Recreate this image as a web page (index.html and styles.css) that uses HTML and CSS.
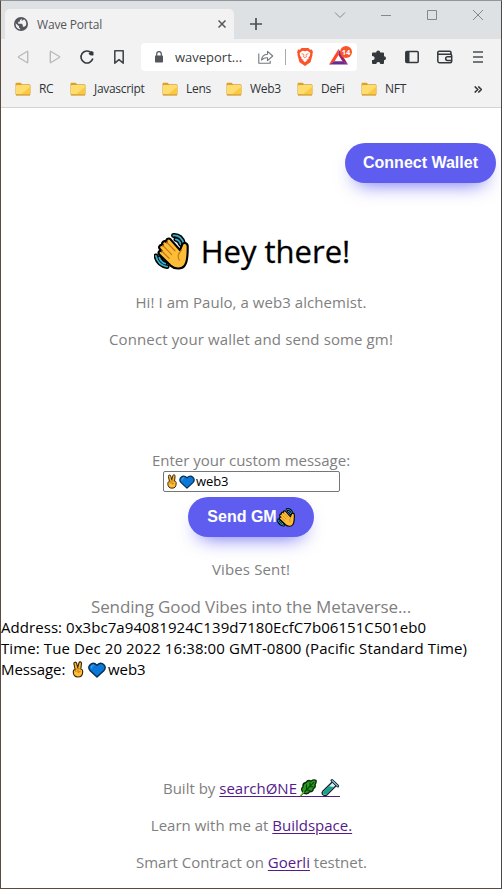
FILE: index.html
```
<!DOCTYPE html>
<html lang="en">
<head>
<meta charset="utf-8">
<title>Wave Portal</title>
<link rel="stylesheet" href="styles.css">
</head>
<body>
<svg class="defs" aria-hidden="true">
  <symbol id="wave" viewBox="0 0 36 38">
    <path d="M20 2.500Q28 2 30.500 11M22.500 6.500q3.500.5 5 5M2 23.500Q4 33 13.500 34.500M5.500 25.500q1.500 4.500 6 6" fill="none" stroke="#000" stroke-width="5" stroke-linecap="round"/>
    <path d="M20 2.500Q28 2 30.500 11M22.500 6.500q3.500.5 5 5M2 23.500Q4 33 13.500 34.500M5.500 25.500q1.500 4.500 6 6" fill="none" stroke="#35b0d0" stroke-width="1.900" stroke-linecap="round"/>
    <path d="M17 6.500c-2-2-5.500 0-4 3-2.500-2.500-6 .3-4 3-2.500-1-5 1.500-3 4l2 2.200c-2.500-1.500-4.500 1.500-2.500 3.500L17 33.500c5 4.500 12 3.500 14.500 0 3.500-4.500 3-11.500 3.200-19.500 0-4.500-5.400-5.200-6.200-.8l-1.800 4.300z" fill="#fdbd38" stroke="#000" stroke-width="2.200" stroke-linejoin="round"/>
    <path d="M13 9.500l8.500 8.700M9 12.700l9.200 9.500M8 18.500l7.500 7.500M28 18q-5 4.500-2 10" fill="none" stroke="#c67a12" stroke-width="1.300" stroke-linecap="round"/>
  </symbol>
  <symbol id="victory" viewBox="0 0 12 18">
    <path d="M3 9L1.700 3C1.400 1 4 .6 4.500 2.400L5.700 7 7 2C7.500.2 10 .8 9.700 2.700L9 8.500c1.600.2 2 1 2 2.500 0 4-1.200 6-5 6-3.500 0-5-2-5-5.500C1 9.800 1.600 9 3 9z" fill="#fdbd38" stroke="#3a2508" stroke-width="1.200" stroke-linejoin="round"/>
    <path d="M3 9l3-1 3 .6M3.500 9.200l.3 2.500M6 9v3l2.700-1" fill="none" stroke="#b76e0e" stroke-width=".9"/>
  </symbol>
  <symbol id="heart" viewBox="0 0 18 16">
    <path d="M9 15L2.200 8.700C-1.500 4.500 4-1.500 9 3.200 14-1.500 19.500 4.500 15.800 8.700z" fill="#0a78d8" stroke="#082b50" stroke-width="1.400" stroke-linejoin="round"/>
    <path d="M3.300 6q0-2.200 2-2.800" fill="none" stroke="#43a7f5" stroke-width="1.200" stroke-linecap="round"/>
  </symbol>
  <symbol id="herb" viewBox="0 0 18 18">
    <path d="M4.500 14Q1 10 4 8q-.5-4 3-4.500Q9 .5 12 2.200 14.500.2 17 1.300q.5 2.500-1 4.200 1 3-1.700 4.200 0 3-3.600 3Q9 15.800 4.500 14z" fill="#2c9a20" stroke="#092b08" stroke-width="1.400" stroke-linejoin="round"/>
    <path d="M1.500 17L15 3.200M7.500 10.500V5.500M11 7.200V3.500M7 11.300h4.500M10.500 7.800h4" fill="none" stroke="#08400a" stroke-width="1.100"/>
    <path d="M1.200 17l4-4.300" stroke="#78c928" stroke-width="1.200"/>
  </symbol>
  <symbol id="tube" viewBox="0 0 18 18">
    <path d="M11.500 2.700L1.800 12.300c-2 2.500 1.500 5.800 4 3.700l9.500-9.600z" fill="#d5eef5" stroke="#172027" stroke-width="1.300"/>
    <path d="M8 7.200L2.400 12.800c-1.300 1.800 1 4 2.900 2.600l7.200-7.300z" fill="#14a48d"/>
    <path d="M11 1.500l5.800 5.600" stroke="#172027" stroke-width="2.800" stroke-linecap="round"/>
    <path d="M11.200 1.700l5.400 5.200" stroke="#82cbe8" stroke-width="1.200" stroke-linecap="round"/>
  </symbol>
  <symbol id="folder" viewBox="0 0 16 14">
    <path d="M.5 12V1.700Q.5.700 1.500.7h4.300l1.200 1.500H14q1.500 0 1.500 1.400V12q0 1-1 1h-13q-1 0-1-1z" fill="#d9a32a"/>
    <path d="M1 4q0-1 1-1h12q1 0 1 1v7.500q0 .8-.8.8H1.800q-.8 0-.8-.8z" fill="#ffdc70"/>
    <path d="M15 5v6.500q0 .8-.8.800H6z" fill="#fbc83f"/>
    <path d="M1 13.200h14" stroke="#c99326" stroke-width=".8"/>
  </symbol>
</svg>

<div class="window">
  <header class="browser">
    <div class="tabstrip">
      <div class="tab">
        <svg class="globe" viewBox="0 0 14 14"><circle cx="7" cy="7" r="7" fill="#53575b"/><path d="M7.600 1.600L5.800 3.400v1.300H4.200v2h3.600l1 1.400v1.700h1.400L12 8.500Q13 4.500 10 2.300L8.700 3.600h-1zM1.600 6.200l3.400 3v1.200l1.200 1v1.100Q1.500 11.500 1.600 6.200z" fill="#f2f2f2"/></svg>
        <span class="tab-title">Wave Portal</span>
        <svg class="tab-close" viewBox="0 0 8 8"><path d="M.5.5l7 7m0-7l-7 7" stroke="#53575b" stroke-width="1.500"/></svg>
      </div>
      <svg class="new-tab" viewBox="0 0 12 12"><path d="M6 0v12M0 6h12" stroke="#4c5054" stroke-width="1.700"/></svg>
      <div class="controls">
        <svg viewBox="0 0 12 12"><path d="M1 3.500l5 5 5-5" /></svg>
        <svg viewBox="0 0 12 12"><path d="M1 6.500h10"/></svg>
        <svg viewBox="0 0 12 12"><path d="M1.500 1.500h9v9h-9z"/></svg>
        <svg viewBox="0 0 12 12"><path d="M1 1l10 10M11 1L1 11"/></svg>
      </div>
    </div>

    <div class="toolbar">
      <div class="nav">
        <svg viewBox="0 0 16 16"><path d="M12.700 2.800v10.400q0 .8-.7.300L3.700 8.500q-.7-.5 0-1L12 2.500q.7-.5.7.3z" fill="none" stroke="#b9babc" stroke-width="1.400"/></svg>
        <svg viewBox="0 0 16 16"><path d="M3.300 2.800v10.400q0 .8.700.3l8.300-5q.7-.5 0-1L4 2.500q-.7-.5-.7.3z" fill="none" stroke="#b9babc" stroke-width="1.400"/></svg>
        <svg viewBox="0 0 16 16"><path d="M12.300 3.800A6 6 0 1 0 13.800 9.500" fill="none" stroke="#34383c" stroke-width="1.600"/><path d="M9.500 4.700l2.800-2.700 2.200 1v3.200q-2.500 1.200-5-1.500z" fill="#34383c"/></svg>
        <svg viewBox="0 0 16 16"><path d="M3.800 1.800h8.400v12.400L8 10.700l-4.200 3.500z" fill="none" stroke="#45494d" stroke-width="1.600" stroke-linejoin="round"/></svg>
      </div>
      <div class="address-bar">
        <svg class="lock" viewBox="0 0 8 12"><path d="M1.700 5V3a2.300 2.300 0 0 1 4.600 0v2" fill="none" stroke="#53575b" stroke-width="1.200"/><rect y="4.500" width="8" height="7" rx=".8" fill="#53575b"/></svg>
        <span class="url">waveport...</span>
        <svg class="share" viewBox="0 0 16 14"><path d="M.8 3.500v9.700h11.400v-2.500M3.500 10q.5-5.500 6-5.800V1.300L14.700 6l-5.200 4.700V7.800Q6 7.500 3.500 10z" fill="none" stroke="#74777a" stroke-width="1.100" stroke-linejoin="round"/></svg>
        <span class="divider"></span>
        <svg class="lion" viewBox="0 0 16 18"><path d="M4.500 0h7L13 1.700l2-.1 1 2.800-.6 1 .1 1.600-2 7.200L8 18l-5.500-3.800L.500 7l.1-1.600-.6-1 1-2.800 2 .1z" fill="#fb542b"/><path d="M5.500 2.700L8 3.200l2.500-.5L13.300 5l-.5 3-1.500 1.700.3 1.300L9 12l-1 1-1-1-2.600-1 .3-1.300L3.200 8l-.5-3z" fill="#fff"/><path d="M4.500 5.700l2.500.8L6.600 9l1.400 1 1.400-1L9 6.500l2.500-.8" fill="none" stroke="#fb542b" stroke-width=".7"/><path d="M5.700 12.300L8 14.300l2.300-2-2.300-.6z" fill="#fff"/></svg>
        <span class="rewards">
          <svg viewBox="0 0 19 16"><path d="M9.500 0L0 15.500l5.500-3 4-6.500z" fill="#ff4724"/><path d="M9.500 0L19 15.500l-5.500-3-4-6.500z" fill="#9e1f63"/><path d="M0 15.500h19l-5.500-3.200h-8z" fill="#662d91"/></svg>
          <span class="badge">14</span>
        </span>
      </div>
      <div class="tools">
        <svg viewBox="0 0 16 16"><path d="M1 4.500q0-1 1-1h3.200a2 2 0 1 1 4 0H12q1 0 1 1v2.800a2 2 0 1 1 0 4V14q0 1-1 1H9.300a2 2 0 1 0-4 0H2q-1 0-1-1v-3a2 2 0 1 0 0-3.800z" fill="#34383c"/></svg>
        <svg viewBox="0 0 16 16"><rect x="1.800" y="2.600" width="12.400" height="11" rx="1" fill="none" stroke="#34383c" stroke-width="1.500"/><path d="M2 2.500h3.500v11H2z" fill="#34383c"/></svg>
        <svg viewBox="0 0 16 16"><path d="M14 5.200V3.500q0-1.200-1.300-1.200H2.200Q.8 2.300.8 3.600v8.500q0 1.600 1.500 1.600h10.900q1.500 0 1.500-1.500V6.700q0-1.500-1.500-1.500H2.300Q.8 5.200.8 3.900M14.800 7.700H10.500a1.800 1.800 0 0 0 0 3.700h4.300" fill="none" stroke="#34383c" stroke-width="1.500"/></svg>
        <svg viewBox="0 0 16 16"><path d="M3 3h10M3 8h10M3 13h10" stroke="#4b4f53" stroke-width="1.700"/></svg>
      </div>
    </div>

    <nav class="bookmarks">
      <span class="bm bm-rc"><svg><use href="#folder"/></svg><b>RC</b></span>
      <span class="bm bm-js"><svg><use href="#folder"/></svg><b>Javascript</b></span>
      <span class="bm bm-lens"><svg><use href="#folder"/></svg><b>Lens</b></span>
      <span class="bm bm-web3"><svg><use href="#folder"/></svg><b>Web3</b></span>
      <span class="bm bm-defi"><svg><use href="#folder"/></svg><b>DeFi</b></span>
      <span class="bm"><svg><use href="#folder"/></svg><b>NFT</b></span>
      <svg class="more" viewBox="0 0 8 7"><path d="M.7.5l3 3-3 3M4.300.5l3 3-3 3" fill="none" stroke="#34383c" stroke-width="1.600"/></svg>
    </nav>
  </header>

  <main class="page">
    <div class="wallet"><button class="btn btn-wallet">Connect Wallet</button></div>
    <h1><svg class="wave-lg"><use href="#wave"/></svg><span>Hey there!</span></h1>
    <p class="bio">Hi! I am Paulo, a web3 alchemist.</p>
    <p class="intro">Connect your wallet and send some gm!</p>

    <form class="message">
      <label for="msg">Enter your custom message:</label>
      <div class="field" id="msg"><svg class="victory"><use href="#victory"/></svg><svg class="heart"><use href="#heart"/></svg><span>web3</span></div>
      <button type="button" class="btn btn-send">Send GM<svg><use href="#wave"/></svg></button>
    </form>

    <p class="sent">Vibes Sent!</p>
    <p class="sending">Sending Good Vibes into the Metaverse...</p>
    <div class="log">
      <div class="addr">Address: 0x3bc7a94081924C139d7180EcfC7b06151C501eb0</div>
      <div class="time">Time: Tue Dec 20 2022 16:38:00 GMT-0800 (Pacific Standard Time)</div>
      <div class="msg">Message: <svg class="victory"><use href="#victory"/></svg><svg class="heart"><use href="#heart"/></svg><span>web3</span></div>
    </div>

    <footer>
      <p>Built by <a href="#">searchØNE<span class="emojis"><svg><use href="#herb"/></svg><svg><use href="#tube"/></svg></span></a></p>
      <p>Learn with me at <a href="#">Buildspace.</a></p>
      <p>Smart Contract on <a href="#">Goerli</a> testnet.</p>
    </footer>
  </main>
</div>
</body>
</html>
```
FILE: styles.css
```
* { box-sizing: border-box; }
html, body { margin: 0; height: 889px; overflow: hidden; }
body { font: 15px/21px "Open Sans", "Noto Sans", sans-serif; color: #000; }
svg { display: block; flex: none; }
.defs { position: absolute; width: 0; height: 0; }
p, h1 { margin: 0; }

.window {
  height: 889px;
  display: flex;
  flex-direction: column;
  border: 1px solid #5b4a42;
  border-top-color: #92969b;
  border-right-color: #4d4a45;
  background: #fff;
}

/* browser chrome */
.browser { height: 107px; background: #f2f2f2; border-bottom: 1px solid #d3d4d5; }
.tabstrip { height: 38px; display: flex; background: #dee1e4; padding-left: 4px; }
.tab {
  width: 229px; height: 30px; margin-top: 8px; padding: 0 8px 0 9px;
  display: flex; align-items: center;
  background: #f2f2f2; border-radius: 5px 5px 0 0;
}
.globe { width: 14px; height: 14px; }
.tab-title { margin-left: 9px; flex: 1; font-size: 12px; letter-spacing: -.17px; color: #53575b; }
.tab-close { width: 8px; height: 8px; }
.new-tab { width: 12px; height: 12px; margin: 17px 0 0 16px; }
.controls { display: flex; gap: 34px; margin: 8px 0 0 72px; }
.controls svg { width: 12px; height: 12px; }
.controls path { fill: none; stroke: #85888b; stroke-width: 1; }

.toolbar { height: 36px; display: flex; align-items: center; padding-left: 14px; }
.nav { display: flex; gap: 16px; width: 126px; }
.nav svg { width: 16px; height: 16px; }
.address-bar {
  width: 216px; height: 28px; padding-left: 14px;
  display: flex; align-items: center;
  background: #fff; border-radius: 4px;
}
.lock { width: 8px; height: 12px; }
.url { margin-left: 12px; width: 83px; font-size: 13px; color: #3c4043; }
.share { width: 16px; height: 14px; }
.divider { width: 1px; height: 16px; margin: 0 11px; background: #a8aaac; }
.lion { width: 16px; height: 18px; }
.rewards { position: relative; margin-left: 16px; }
.rewards svg { width: 19px; height: 16px; }
.badge {
  position: absolute; left: 11px; top: -3px; width: 12px; height: 12px;
  border-radius: 6px; background: #fb542b; color: #fff;
  font-size: 7.5px; font-weight: 700; line-height: 12px; text-align: center;
}
.tools { display: flex; gap: 17px; margin-left: 14px; }
.tools svg { width: 16px; height: 16px; }

.bookmarks { height: 28px; display: flex; align-items: center; padding-left: 14px; }
.bm { display: flex; align-items: center; gap: 8px; }
.bm svg { width: 16px; height: 14px; }
.bm b { font-weight: 400; font-size: 12px; line-height: 20px; letter-spacing: -.3px; color: #303438; }
.bm-rc { width: 55px; }
.bm-js { width: 92px; }
.bm-lens { width: 64px; }
.bm-web3 { width: 71px; }
.bm-defi { width: 64px; }
.more { width: 8px; height: 7px; margin: 0 19px 0 auto; }

/* page */
.page { flex: 1; display: flex; flex-direction: column; align-items: center; color: #808080; }
.wallet { align-self: stretch; display: flex; justify-content: flex-end; padding: 35px 5px 0 0; }
.btn {
  height: 40px; padding: 0; border: 0; border-radius: 20px;
  display: flex; align-items: center; justify-content: center;
  background: #5e5df0; color: #fff;
  box-shadow: #5e5df0 0 10px 20px -10px;
  font: 700 16px/24px "Liberation Sans", Arial, sans-serif;
}
.btn-wallet { width: 151px; }
h1 {
  height: 42px; margin: 47px 0 20px; padding-left: 2px;
  display: flex; align-items: center; gap: 12px;
  font-size: 31px; line-height: 42px; font-weight: 400; color: #000;
  -webkit-text-stroke: .3px #000;
}
.wave-lg { width: 35px; height: 37px; }
.bio { letter-spacing: .06px; }
.intro { margin-top: 16px; letter-spacing: .12px; }

.message { margin-top: 100px; display: flex; flex-direction: column; align-items: center; }
.field {
  width: 177px; height: 21px; margin: 0 0 5px 1px; padding-left: 3px;
  display: flex; align-items: center;
  border: 1px solid #767676; border-radius: 2px;
  font-size: 13px; letter-spacing: -.1px; color: #000;
}
.field .victory { width: 10px; height: 15px; }
.field .heart { width: 16px; height: 14px; margin: 0 1px 0 2px; }
.btn-send { width: 126px; }
.btn-send svg { width: 18px; height: 19px; }

.sent { margin-top: 22px; letter-spacing: .13px; }
.sending { margin-top: 16px; font-size: 17px; letter-spacing: -.12px; }
.log { align-self: stretch; color: #000; }
.addr { letter-spacing: .06px; }
.time { letter-spacing: .1px; white-space: nowrap; }
.msg { display: flex; align-items: center; white-space: pre; letter-spacing: -.1px; }
.msg .victory { width: 12px; height: 17px; margin-left: 3px; }
.msg .heart { width: 18px; height: 16px; margin: 0 2px 0 4px; }

footer { margin-top: 98px; padding-left: 1px; display: flex; flex-direction: column; align-items: center; gap: 16px; }
footer a { color: #551a8b; text-underline-offset: 2px; }
.emojis { display: inline-flex; gap: 4px; height: 18px; padding: 0 1px 0 2px; vertical-align: -3px; border-bottom: 1px solid #551a8b; }
.emojis svg { width: 18px; height: 18px; }
```
